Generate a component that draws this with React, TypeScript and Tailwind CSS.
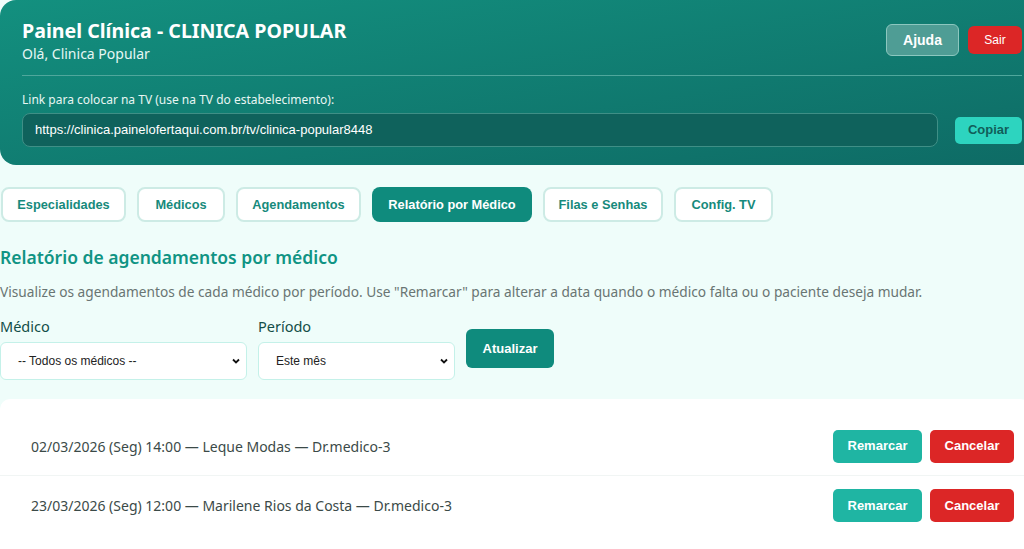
import React from "react";

const seg = { fontFamily: '"Noto Sans", "Open Sans", sans-serif' };
const ari = { fontFamily: '"Liberation Sans", Arial, sans-serif' };

const tabs: [string, string][] = [
  ["Especialidades", "w-[125px]"],
  ["Médicos", "w-[88px]"],
  ["Agendamentos", "w-[125px]"],
  ["Relatório por Médico", "w-[160px]"],
  ["Filas e Senhas", "w-[120px]"],
  ["Config. TV", "w-[99px]"],
];

function Row({ text, last }: { text: string; last?: boolean }) {
  return (
    <div className={`flex items-center justify-between h-[59px] pl-[31px] pr-[16px] ${last ? "" : "border-b border-[#f1f5f4]"}`}>
      <span className="text-[14px] text-[#3b4a48]" style={seg}>{text}</span>
      <div className="flex gap-[8px]" style={ari}>
        <button className="w-[89px] h-[33px] rounded-[5px] bg-[#1fb5a3] text-white text-[13px] font-bold">Remarcar</button>
        <button className="w-[84px] h-[33px] rounded-[5px] bg-[#dc2626] text-white text-[13px] font-bold">Cancelar</button>
      </div>
    </div>
  );
}

export default function App() {
  return (
    <div className="w-[1024px] h-[549px] overflow-hidden bg-[#effdfa]">
      <div className="w-[1044px]">
        <header className="h-[165px] rounded-[16px] bg-gradient-to-br from-[#13907f] to-[#0e6b65] px-[22px] text-white" style={seg}>
          <div className="flex justify-between h-[76px] border-b border-[#4fa79c] pt-[17px]">
            <div>
              <h1 className="text-[19.6px] font-bold leading-[28px]">Painel Clínica - CLINICA POPULAR</h1>
              <p className="text-[14px] leading-[18px] text-[#e6f7f4]">Olá, Clinica Popular</p>
            </div>
            <div className="flex gap-[9px] pt-[7px]" style={ari}>
              <button className="w-[73px] h-[32px] rounded-[6px] border border-[#8cc7bf] bg-[#4f9d95] text-[14px] font-bold text-white">Ajuda</button>
              <button className="w-[54px] h-[28px] mt-[2px] rounded-[6px] bg-[#dc2626] text-[12px] text-white">Sair</button>
            </div>
          </div>
          <div className="pt-[16px]">
            <p className="text-[12px] leading-[16px] text-[#e8f6f3]">Link para colocar na TV (use na TV do estabelecimento):</p>
            <div className="flex items-center gap-[17px] mt-[5px]">
              <div className="flex-1 h-[34px] rounded-[8px] border border-[#3f8f86] bg-[#0f625c] flex items-center px-[12px]">
                <span className="text-[13px] text-white" style={ari}>https://clinica.painelofertaqui.com.br/tv/clinica-popular8448</span>
              </div>
              <button className="w-[67px] h-[27px] rounded-[5px] bg-[#2dd4bf] text-[#115e59] text-[13px] font-bold" style={ari}>Copiar</button>
            </div>
          </div>
        </header>

        <nav className="flex gap-[11px] mt-[22px] pl-[1px]" style={ari}>
          {tabs.map(([t, w]) =>
            t === "Relatório por Médico" ? (
              <button key={t} className={`${w} h-[35px] rounded-[8px] bg-[#0f8b7d] text-white text-[12.8px] font-bold`}>{t}</button>
            ) : (
              <button key={t} className={`${w} h-[35px] rounded-[8px] border-2 border-[#cdebe5] bg-white text-[#168a7c] text-[12.8px] font-bold`}>{t}</button>
            )
          )}
        </nav>

        <h2 className="mt-[23px] text-[17.5px] font-semibold text-[#109484] leading-[24px]" style={seg}>Relatório de agendamentos por médico</h2>
        <p className="mt-[13px] text-[13.7px] text-[#697573] leading-[20px]" style={seg}>
          Visualize os agendamentos de cada médico por período. Use "Remarcar" para alterar a data quando o médico falta ou o paciente deseja mudar.
        </p>

        <div className="flex items-end gap-[11px] mt-[14px]" style={seg}>
          <div className="flex flex-col">
            <label className="text-[14.5px] text-[#134e48] leading-[20px]">Médico</label>
            <div className="mt-[6px] w-[247px] h-[38px] rounded-[6px] border border-[#c4f1e9] bg-white flex items-center justify-between pl-[17px] pr-[5px]">
              <span className="text-[12px] text-[#222]" style={ari}>-- Todos os médicos --</span>
              <svg width="10" height="10" viewBox="0 0 10 10"><path d="M2 3.5 L5 6.5 L8 3.5" stroke="#111" strokeWidth="1.8" fill="none" /></svg>
            </div>
          </div>
          <div className="flex flex-col">
            <label className="text-[14.5px] text-[#134e48] leading-[20px]">Período</label>
            <div className="mt-[6px] w-[197px] h-[38px] rounded-[6px] border border-[#c4f1e9] bg-white flex items-center justify-between pl-[17px] pr-[5px]">
              <span className="text-[12px] text-[#222]" style={ari}>Este mês</span>
              <svg width="10" height="10" viewBox="0 0 10 10"><path d="M2 3.5 L5 6.5 L8 3.5" stroke="#111" strokeWidth="1.8" fill="none" /></svg>
            </div>
          </div>
          <button className="mb-[12px] w-[88px] h-[39px] rounded-[6px] bg-[#0f8b7d] text-white text-[13px] font-bold" style={ari}>Atualizar</button>
        </div>

        <div className="mt-[19px] w-[1030px] rounded-[10px] bg-white pt-[18px] pb-[30px]">
          <Row text="02/03/2026 (Seg) 14:00 — Leque Modas — Dr.medico-3" />
          <Row text="23/03/2026 (Seg) 12:00 — Marilene Rios da Costa — Dr.medico-3" last />
        </div>
      </div>
    </div>
  );
}
